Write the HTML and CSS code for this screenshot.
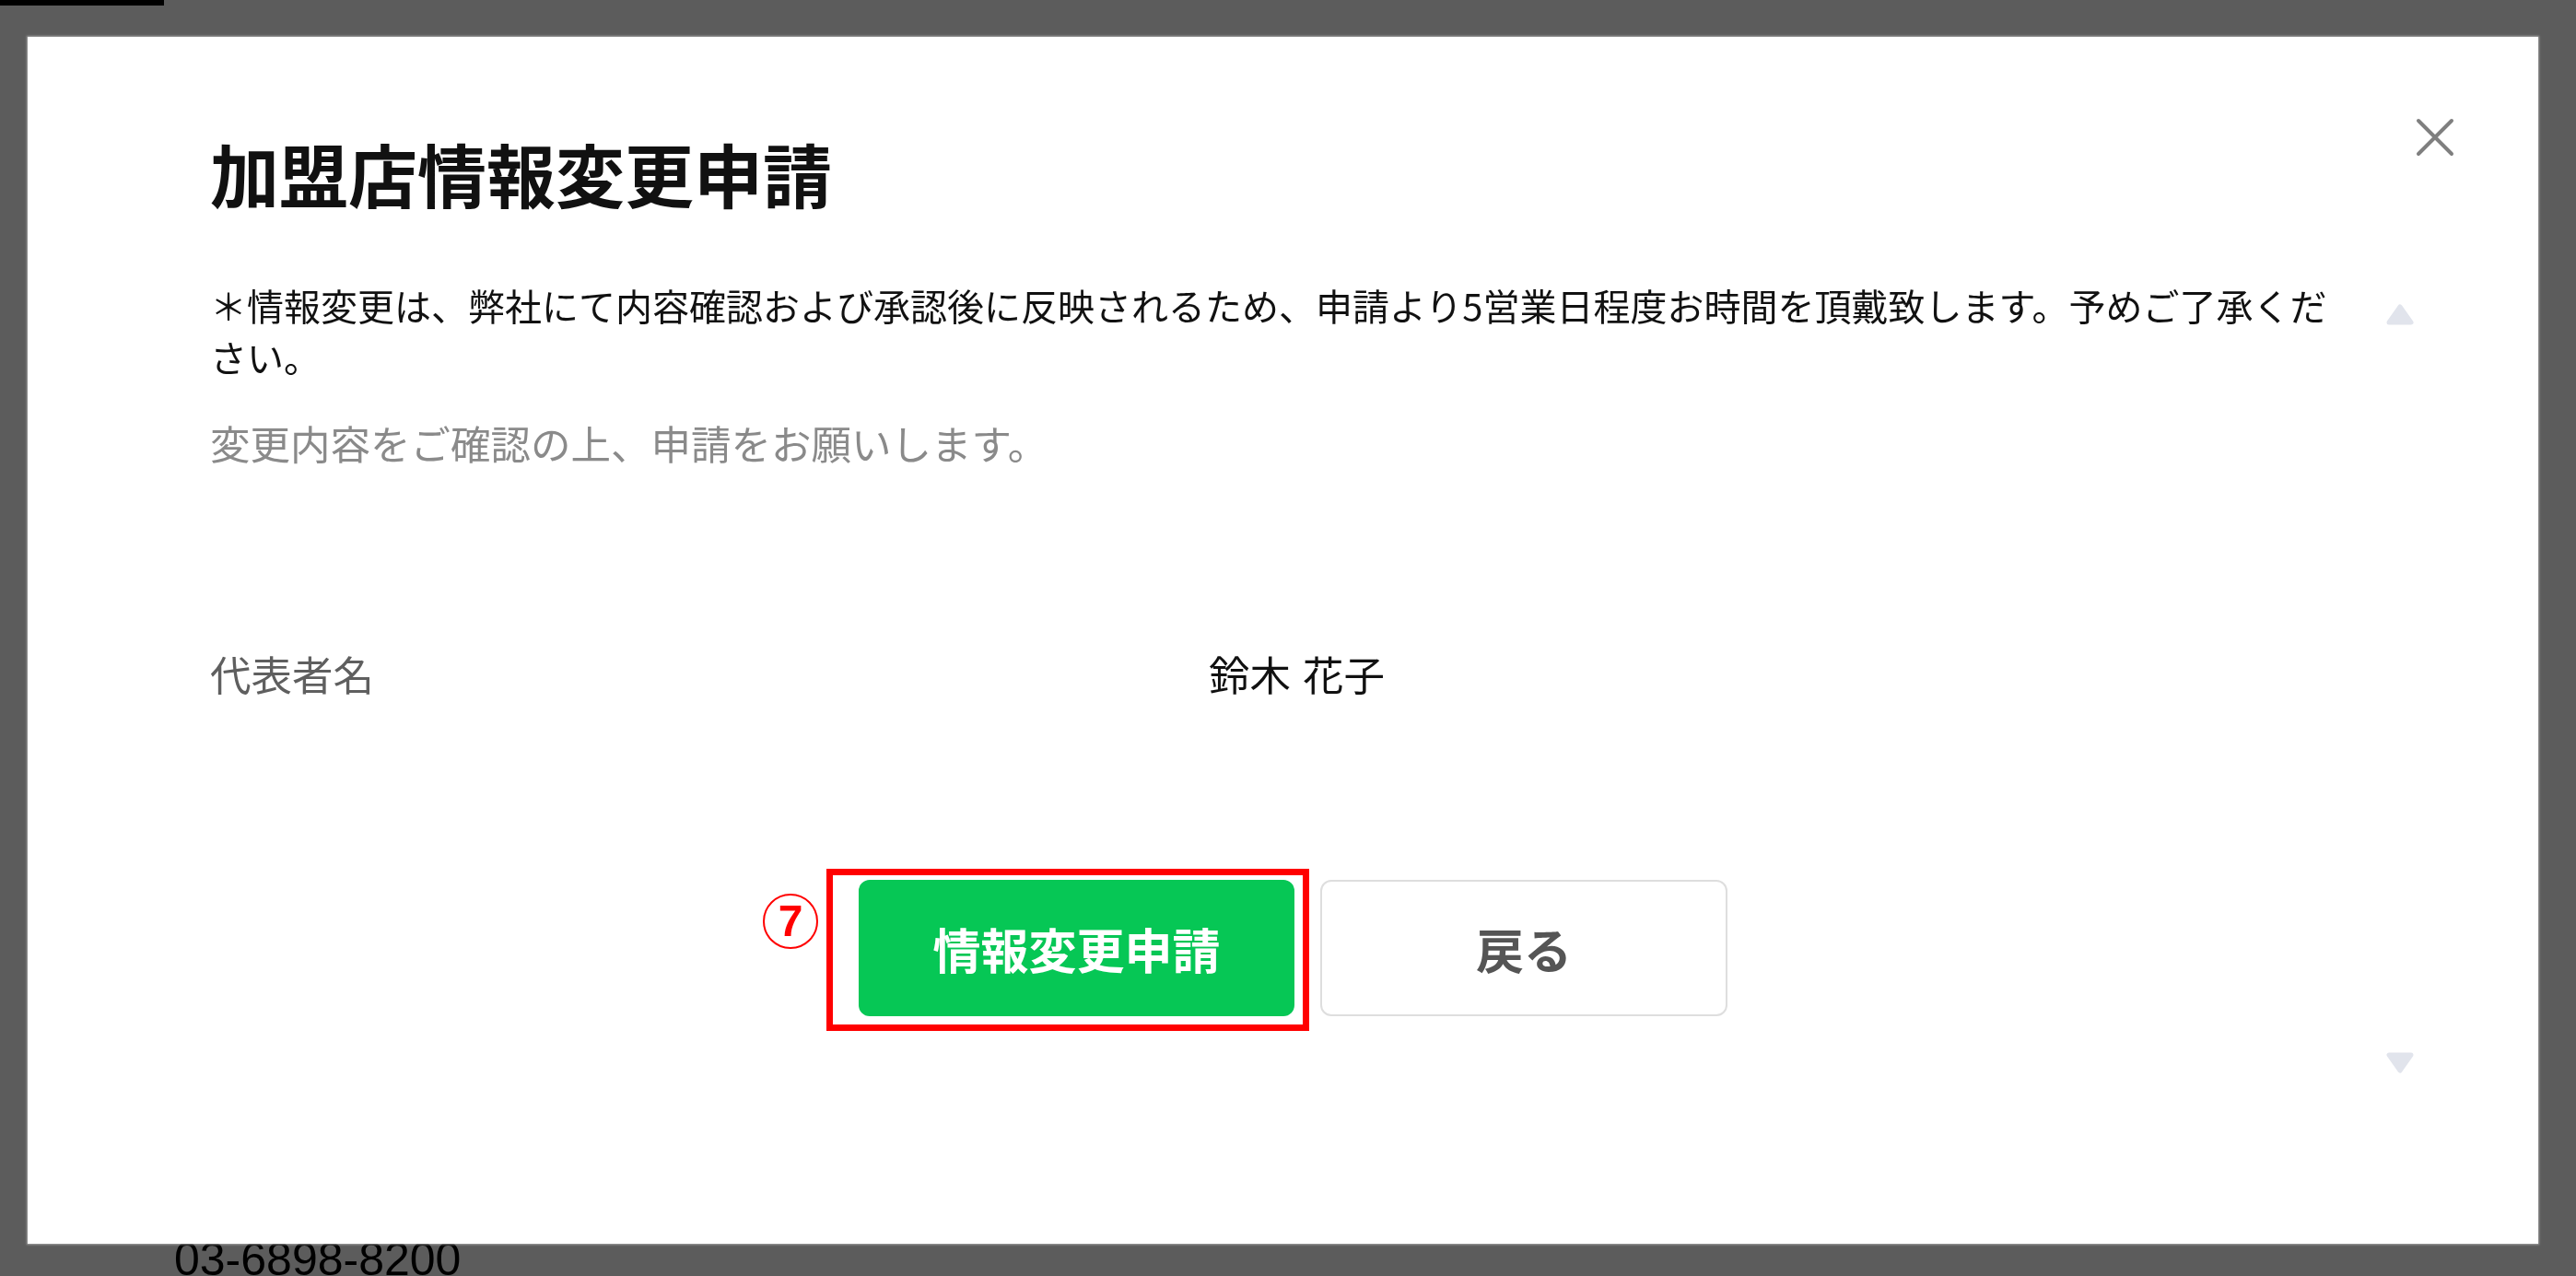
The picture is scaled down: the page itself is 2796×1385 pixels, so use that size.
FILE: index.html
```html
<!DOCTYPE html>
<html lang="ja">
<head>
<meta charset="utf-8">
<title>加盟店情報変更申請</title>
<link rel="stylesheet" href="styles.css">
</head>
<body>
<div class="page">
  <div class="page-topbar"></div>
  <div class="page-phone">03-6898-8200</div>
</div>
<div class="overlay">
  <div class="modal">
    <div class="modal-head">
      <h1 class="modal-title">加盟店情報変更申請</h1>
      <button class="modal-close" type="button" aria-label="閉じる">
        <svg width="42" height="42" viewBox="0 0 42 42"><path d="M3 3 L39 39 M39 3 L3 39" stroke="#7f7f7f" stroke-width="4" stroke-linecap="round" fill="none"/></svg>
      </button>
    </div>
    <div class="modal-body">
      <div class="modal-content">
        <p class="note">＊情報変更は、弊社にて内容確認および承認後に反映されるため、申請より5営業日程度お時間を頂戴致します。予めご了承ください。</p>
        <p class="lead">変更内容をご確認の上、申請をお願いします。</p>
        <div class="field-row">
          <div class="field-label">代表者名</div>
          <div class="field-value">鈴木 花子</div>
        </div>
        <div class="actions">
          <div class="primary-wrap">
            <button class="btn btn-primary" type="button">情報変更申請</button>
            <div class="annot-box"><span class="annot-num">7</span></div>
          </div>
          <button class="btn btn-secondary" type="button">戻る</button>
        </div>
      </div>
      <div class="scrollbar">
        <svg width="30" height="23" viewBox="0 0 30 23"><polygon points="15,3 27,20 3,20" fill="#e1e4ec" stroke="#e1e4ec" stroke-width="5" stroke-linejoin="round"/></svg>
        <svg width="30" height="23" viewBox="0 0 30 23"><polygon points="3,3 27,3 15,20" fill="#e1e4ec" stroke="#e1e4ec" stroke-width="5" stroke-linejoin="round"/></svg>
      </div>
    </div>
  </div>
</div>
</body>
</html>
```
FILE: styles.css
```css
* { box-sizing: border-box; }
html, body { margin: 0; padding: 0; }
body {
  width: 2796px;
  height: 1385px;
  overflow: hidden;
  background: #ffffff;
  font-family: "Noto Sans CJK JP", "Noto Sans", sans-serif;
  color: #111;
}
.page { position: relative; }
.page-topbar { width: 178px; height: 6px; background: #000; }
.page-phone {
  margin-top: 1332px;
  padding-left: 189px;
  font-family: "Liberation Sans", sans-serif;
  font-size: 50px;
  line-height: 58px;
  color: #000;
}
.overlay {
  position: fixed;
  inset: 0;
  background: rgba(0, 0, 0, 0.64);
  display: flex;
  padding: 40px 41px 35px 30px;
}
.modal {
  flex: 1;
  background: #fff;
  box-shadow: 0 0 2px 1px rgba(180, 180, 180, 0.8);
  display: flex;
  flex-direction: column;
}
.modal-head {
  display: flex;
  justify-content: space-between;
  align-items: flex-start;
  padding: 88px 91px 0 198px;
}
.modal-title {
  margin: 15px 0 0;
  font-size: 75px;
  line-height: 90px;
  font-weight: 700;
  color: #111;
}
.modal-close {
  width: 42px;
  height: 42px;
  padding: 0;
  border: 0;
  background: none;
  display: block;
}
.modal-close svg { display: block; }
.modal-body {
  margin-top: 70px;
  display: flex;
  padding: 0 135px 0 198px;
}
.modal-content {
  flex: 1;
  padding-bottom: 77px;
}
.note {
  margin: 0;
  font-size: 40px;
  line-height: 56px;
  color: #111;
}
.lead {
  margin: 36px 0 0;
  font-size: 43.5px;
  line-height: 60px;
  color: #8a8a8a;
}
.field-row {
  margin-top: 190px;
  display: grid;
  grid-template-columns: 1084px 1fr;
  font-size: 44.5px;
  line-height: 60px;
}
.field-label { color: #5f5f5f; }
.field-value { color: #111; word-spacing: 3px; }
.actions {
  margin-top: 194px;
  display: flex;
  justify-content: center;
  gap: 28px;
  padding-left: 29px;
}
.primary-wrap { position: relative; }
.btn {
  height: 148px;
  border-radius: 12px;
  font-family: "Noto Sans CJK JP", sans-serif;
  font-size: 52px;
  font-weight: 700;
  display: flex;
  align-items: center;
  justify-content: center;
  padding: 0;
}
.btn-primary {
  width: 473px;
  background: #06c755;
  color: #fff;
  border: 0;
}
.btn-secondary {
  width: 442px;
  background: #fff;
  color: #555;
  border: 2px solid #dedede;
}
.annot-box {
  position: absolute;
  left: -35px;
  right: -16px;
  top: -12px;
  bottom: -16px;
  border: 7px solid #ff0000;
  pointer-events: none;
}
.annot-num {
  position: absolute;
  left: -76px;
  top: 20px;
  width: 60px;
  height: 60px;
  border: 2px solid #ff0000;
  border-radius: 50%;
  color: #ff0000;
  font-family: "Liberation Sans", sans-serif;
  font-weight: 700;
  font-size: 48px;
  line-height: 56px;
  text-align: center;
}
.scrollbar {
  width: 30px;
  margin-left: 40px;
  display: flex;
  flex-direction: column;
  justify-content: space-between;
  padding: 27px 0 15px;
}
.scrollbar svg { display: block; }
```
